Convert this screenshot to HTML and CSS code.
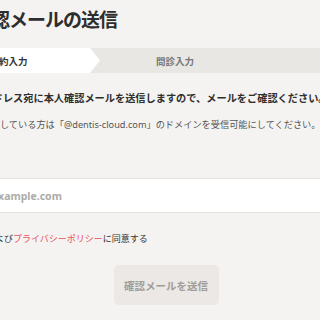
FILE: index.html
```html
<!DOCTYPE html>
<html lang="ja">
  <head>
    <meta charset="UTF-8" />
    <meta name="viewport" content="width=device-width, initial-scale=1.0" />
    <title>確認メールの送信</title>
    <link rel="stylesheet" href="styles.css">
  </head>
  <body>
    <main class="mail-Page">
      <h1 class="mail-Page_Title">確認メールの送信</h1>
      <nav class="mail-Steps">
        <span class="mail-Steps_Item mail-Steps_Item-active">予約入力</span>
        <span class="mail-Steps_Item">問診入力</span>
      </nav>
      <div class="mail-Lead">
        <p class="mail-Lead_Main">メールアドレス宛に本人確認メールを送信しますので、メールをご確認ください。</p>
        <p class="mail-Lead_Sub">受信制限をしている方は「@dentis-cloud.com」のドメインを受信可能にしてください。</p>
      </div>
      <input class="mail-Input" type="email" placeholder="info@example.com" />
      <label class="mail-Agree">
        <span class="mail-Agree_Box"></span>
        <span><a class="mail-Agree_Link">利用規約</a>および<a class="mail-Agree_Link">プライバシーポリシー</a>に同意する</span>
      </label>
      <div class="mail-Actions">
        <button class="mail-Btn" disabled>確認メールを送信</button>
      </div>
    </main>
  </body>
</html>
```

FILE: styles.css
```css
html {
  box-sizing: border-box;
  -webkit-font-smoothing: antialiased;
}

*,
*:before,
*:after {
  box-sizing: inherit;
}

body,
h1,
p {
  margin: 0;
  font-weight: 400;
}

body {
  width: 320px;
  height: 320px;
  overflow: hidden;
  background-color: #f4f3f1;
  color: #333;
  font-family: 'Noto Sans', 'Noto Sans CJK JP', sans-serif;
}

/* the page is wider than the window, we only see its middle */
.mail-Page {
  width: 450px;
  margin-left: -60px;
  padding-top: 11px;
}

.mail-Page_Title {
  padding-left: 33px;
  font-size: 19px;
  line-height: 19px;
  letter-spacing: -1px;
  font-weight: 700;
  color: #2e2e2e;
}

.mail-Steps {
  display: flex;
  height: 25px;
  margin-top: 18px;
  background-color: #e9e7e4;
}

.mail-Steps_Item {
  display: flex;
  align-items: center;
  padding-left: 56px;
  font-size: 9.5px;
  font-weight: 700;
  color: #777;
}

.mail-Steps_Item-active {
  width: 160px;
  padding-left: 49.5px;
  background-color: #fff;
  color: #333;
  clip-path: polygon(0 0, calc(100% - 10px) 0, 100% 50%, calc(100% - 10px) 100%, 0 100%);
}

.mail-Lead {
  display: flex;
  flex-direction: column;
  gap: 13px;
  margin-top: 18px;
  padding-left: 12px;
  white-space: nowrap;
}

.mail-Lead_Main {
  font-size: 10.2px;
  line-height: 14px;
  font-weight: 700;
  color: #2e2e2e;
}

.mail-Lead_Sub {
  padding-left: 2px;
  font-size: 9.2px;
  line-height: 14px;
  color: #555;
}

.mail-Input {
  display: block;
  width: 100%;
  height: 35px;
  margin-top: 46px;
  padding: 0 0 0 21px;
  border: 1px solid #e4e1de;
  border-radius: 3px;
  background-color: #fff;
  font-family: inherit;
  font-size: 10.5px;
  outline: 0;
}

.mail-Input::placeholder {
  color: #aeaba8;
  font-weight: 700;
}

.mail-Agree {
  display: flex;
  align-items: center;
  gap: 4px;
  margin-top: 19px;
  font-size: 9px;
  line-height: 14px;
  color: #333;
  white-space: nowrap;
}

.mail-Agree_Box {
  width: 6px;
  height: 6px;
  border: 1px solid #bbb;
  background-color: #fff;
}

.mail-Agree_Link {
  color: #e8505b;
}

.mail-Actions {
  display: flex;
  justify-content: center;
  margin-top: 19px;
  padding-left: 2px;
}

.mail-Btn {
  appearance: none;
  width: 105px;
  height: 40px;
  padding: 0;
  border: 0;
  border-radius: 5px;
  background-color: #ebe8e5;
  color: #a09c98;
  font-family: inherit;
  font-size: 10.5px;
  font-weight: 700;
}
```
